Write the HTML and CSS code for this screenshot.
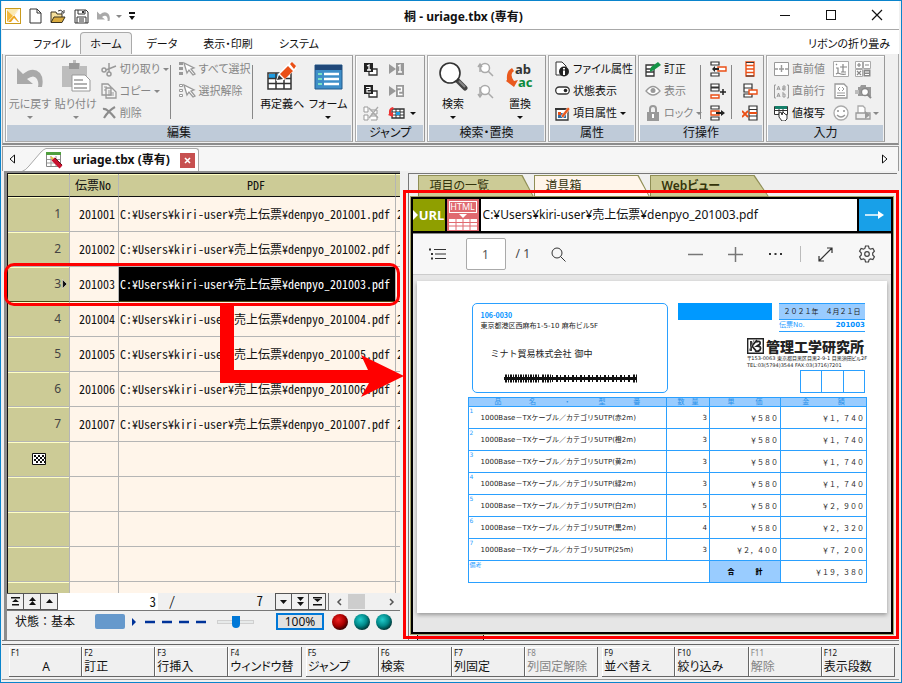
FILE: index.html
```html
<!DOCTYPE html>
<html lang="ja">
<head>
<meta charset="utf-8">
<title>桐 - uriage.tbx (専有)</title>
<link rel="stylesheet" href="styles.css">
</head>
<body>
<div class="window">

<header class="titlebar">
  <div class="quick">
    <svg width="16" height="16" viewBox="0 0 16 16"><rect x=".5" y=".5" width="15" height="15" fill="#fff" stroke="#c99a1c"/><path d="M2 1h12L7.500 8z" fill="#fbe9b0"/><path d="M2 2l6 6-6 6z" fill="#f3b83a"/><path d="M14 2L3 14h3l3-4 4 4h1L9 7z" fill="#eda51f"/></svg>
    <button class="plain" aria-label="新規"><svg width="13" height="16" viewBox="0 0 13 16"><path d="M1 1h7l4 4v10H1zM8 1v4h4" fill="#fff" stroke="#333"/></svg></button>
    <button class="plain" aria-label="開く"><svg width="16" height="15" viewBox="0 0 16 15"><path d="M1 13V3h5l1 2h5v3" fill="#f4df9c" stroke="#3a3320"/><path d="M1 13.500L4 8h11l-3 5.500z" fill="#d9ab3f" stroke="#3a3320"/><path d="M8 2q3-2 5 1M14 1v3h-3" fill="none" stroke="#333"/></svg></button>
    <button class="plain" aria-label="保存"><svg width="15" height="15" viewBox="0 0 15 15"><path d="M1 1h11l2 2v11H1z" fill="#fff" stroke="#333"/><path d="M4 1v4h7V1M3 14V8h9v6M5 10h5M5 12h5" fill="none" stroke="#333"/><path d="M8 2h2v2H8z" fill="#333"/></svg></button>
    <button class="plain" aria-label="元に戻す"><svg width="13" height="12" viewBox="0 0 26 22"><use href="#undo"/></svg></button>
    <i class="caret dim"></i>
    <svg width="6" height="8" viewBox="0 0 6 8"><path d="M0 0h6v2H0zM0 4h6L3 8z" fill="#111"/></svg>
  </div>
  <h1>桐 - uriage.tbx (専有)</h1>
  <div class="syscmds">
    <button class="plain" aria-label="最小化"><svg width="12" height="12"><path d="M1 6.500h10" stroke="#111"/></svg></button>
    <button class="plain" aria-label="最大化"><svg width="12" height="12"><rect x="1.500" y="1.500" width="9" height="9" fill="none" stroke="#111"/></svg></button>
    <button class="plain" aria-label="閉じる"><svg width="12" height="12"><path d="M1 1l10 10M11 1L1 11" stroke="#111" stroke-width="1.200"/></svg></button>
  </div>
</header>

<nav class="menutabs">
  <button>ファイル</button>
  <button class="on">ホーム</button>
  <button>データ</button>
  <button>表示・印刷</button>
  <button>システム</button>
  <button class="fold">リボンの折り畳み</button>
</nav>

<section class="ribbon">
  <div class="group">
    <div class="tools edit">
      <button class="big dim"><svg width="26" height="28" viewBox="0 -4 26 28"><defs><path id="undo" d="M0 2v16h16l-6-5q7-5 10 0 2 4 1 8h4q2-9-2-14-7-7-17 1z" fill="#a9a9a9"/></defs><use href="#undo"/></svg><span>元に戻す</span><i class="caret"></i></button>
      <button class="big dim"><svg width="30" height="32" viewBox="0 0 30 32"><path d="M1 6h7V3h4V0h3v3h4v3h7v21H1z" fill="#bdbdbd"/><path d="M8 3h10v6H8z" fill="#999"/><path d="M11 15h13l5 5v11H11z" fill="#fff" stroke="#999"/><path d="M13 20h9M13 24h13M13 28h13" stroke="#999" stroke-width="1.500"/></svg><span>貼り付け</span><i class="caret"></i></button>
      <div class="col">
        <button class="small dim"><svg width="16" height="15" viewBox="0 0 16 15"><g fill="none" stroke="#999" stroke-width="1.500"><circle cx="3" cy="8" r="2"/><circle cx="8" cy="12" r="2"/><path d="M5 8l10-4M8 10V1"/></g></svg>切り取り<i class="caret"></i></button>
        <button class="small dim"><svg width="16" height="16" viewBox="0 0 16 16"><path d="M1 1h6l3 3v8H1zM5 5h6l4 4v6H5z" fill="#f4f4f4" stroke="#999" stroke-width="1.300"/><path d="M7 8h3M7 10h6M7 12h6M3 4h3M3 7h2" stroke="#999"/></svg>コピー<i class="caret"></i></button>
        <button class="small dim"><svg width="16" height="14" viewBox="0 0 16 14"><path d="M2 3q4-1 12 9M14 1Q8 4 3 12" fill="none" stroke="#8c8c8c" stroke-width="2.200"/></svg>削除</button>
      </div>
      <hr>
      <div class="col">
        <button class="small dim"><svg width="17" height="16" viewBox="0 0 17 16"><path d="M0 1h4v3H0zM0 6h4v3H0zM0 11h4v3H0z" fill="#999"/><path d="M5 2l3 10 2-3 4 5 2-1-4-5 3-1z" fill="#fff" stroke="#999" stroke-width="1.300"/></svg>すべて選択</button>
        <button class="small dim"><svg width="17" height="16" viewBox="0 0 17 16"><path d="M.5 1.500h3v2h-3zM.5 6.500h3v2h-3zM.5 11.500h3v2h-3z" fill="#fff" stroke="#999"/><path d="M5 2l3 10 2-3 4 5 2-1-4-5 3-1z" fill="#fff" stroke="#999" stroke-width="1.300"/></svg>選択解除</button>
      </div>
      <hr>
      <button class="big"><svg width="31" height="30" viewBox="0 0 31 30"><path d="M1 12h23v16H1z" fill="#fff" stroke="#333" stroke-width="1.500"/><path d="M2 13h14v4H2z" fill="#1d9be0"/><path d="M1 17.500h23M1 22.500h23M9 12v16M17 12v16" stroke="#333" stroke-width="1.500"/><path d="M9 20l2-7L23 1l7 6-13 12z" fill="#fff"/><path d="M10 19l2-5 4 4z" fill="#333"/><path d="M13 13l8-8 5 5-8 8zM23 3l2-2 4 4-2 3z" fill="#ea4f16"/></svg><span>再定義へ</span></button>
      <button class="big"><svg width="29" height="30" viewBox="0 0 29 30"><path d="M1 4h27v24H1z" fill="#3e8ec8" stroke="#235a8c"/><path d="M1 4h27v5H1z" fill="#20497a"/><path d="M10 13h15M10 18h15M10 23h15" stroke="#fff" stroke-width="2.400"/><path d="M4 13h4M4 18h4M4 23h4" stroke="#7ae0c4" stroke-width="2"/></svg><span>フォーム</span><i class="caret"></i></button>
    </div>
    <h2>編集</h2>
  </div>

  <div class="group">
    <div class="tools icons2">
      <button class="plain" aria-label="記憶1"><svg width="16" height="15" viewBox="0 0 16 15"><path d="M7 7h7v6H6v-3" fill="#fff" stroke="#333" stroke-width="1.300"/><path d="M1 1h9v9H1z" fill="#222"/><path d="M4 4l2-1v5M4 8h4" fill="none" stroke="#fff" stroke-width="1.300"/></svg></button>
      <button class="plain" aria-label="移動1"><svg width="16" height="14" viewBox="0 0 16 14"><path d="M1 2l7 5-7 5z" fill="#999"/><path d="M8 1h8v12H8z" fill="#999"/><path d="M10 4l2-1v7M10 10h4" fill="none" stroke="#fff" stroke-width="1.300"/></svg></button>
      <button class="plain" aria-label="記憶2"><svg width="16" height="15" viewBox="0 0 16 15"><path d="M7 7h7v6H6v-3" fill="#fff" stroke="#333" stroke-width="1.300"/><path d="M1 1h9v9H1z" fill="#222"/><path d="M3 3.500h4v2H4v2.500h4" fill="none" stroke="#fff" stroke-width="1.200"/></svg></button>
      <button class="plain" aria-label="移動2"><svg width="16" height="14" viewBox="0 0 16 14"><path d="M1 2l7 5-7 5z" fill="#999"/><path d="M8 1h8v12H8z" fill="#999"/><path d="M9.500 3.500h4v3.500h-3v3.500h4" fill="none" stroke="#fff" stroke-width="1.300"/></svg></button>
      <button class="plain" aria-label="記憶の解除"><svg width="16" height="15" viewBox="0 0 16 15"><path d="M1 1h4v5H1zM1 9h4v5H1zM8 4h6v4H8M8 14h6v-4H8" fill="#fff" stroke="#999"/><path d="M6 2l9 10M15 1L6 12" stroke="#aaa" stroke-width="1.300"/></svg></button>
      <button class="plain" aria-label="表ジャンプ"><svg width="17" height="15" viewBox="0 0 17 15"><path d="M4 3h12v9H4z" fill="#fff" stroke="#333" stroke-width="1.300"/><path d="M4 6h12M4 9h12M8 3v9M12 3v9" stroke="#333"/><path d="M8 6h4v3H8z" fill="#1d9be0"/><path d="M5 1Q0 2 1 8l-1 1 5 2V6L3 7q0-4 3-4z" fill="#e33"/></svg></button>
      <i class="caret"></i>
    </div>
    <h2>ジャンプ</h2>
  </div>

  <div class="group">
    <div class="tools search">
      <button class="big"><svg width="30" height="30" viewBox="0 0 30 30"><path d="M19 19l8 8" stroke="#444" stroke-width="5" stroke-linecap="round"/><path d="M21 20l6 6" stroke="#888" stroke-width="2"/><circle cx="12" cy="12" r="10" fill="#fff" stroke="#333" stroke-width="1.600"/></svg><span>検索</span><i class="caret"></i></button>
      <div class="col">
        <button class="plain" aria-label="前を検索"><svg width="17" height="15" viewBox="0 0 17 15"><circle cx="8" cy="6" r="4.500" fill="#fff" stroke="#aaa" stroke-width="1.500"/><path d="M11 9l5 5M1 5l2-3 2 3M3 2v8" fill="none" stroke="#aaa" stroke-width="1.500"/></svg></button>
        <button class="plain" aria-label="次を検索"><svg width="17" height="15" viewBox="0 0 17 15"><circle cx="8" cy="6" r="4.500" fill="#fff" stroke="#aaa" stroke-width="1.500"/><path d="M11 9l5 5M1 10l2 3 2-3M3 3v10" fill="none" stroke="#aaa" stroke-width="1.500"/></svg></button>
      </div>
      <button class="big"><svg width="28" height="28" viewBox="0 0 28 28"><path d="M6 6Q0 9 1 18l-1 1 8 6 4-7-4 1Q3 12 8 9z" fill="#ea5a1e"/><text class="ab" x="9" y="12">ab</text><text class="ab ac" x="12" y="25">ac</text></svg><span>置換</span><i class="caret"></i></button>
    </div>
    <h2>検索・置換</h2>
  </div>

  <div class="group">
    <div class="tools rows">
      <button class="small"><svg width="15" height="16" viewBox="0 0 15 16"><path d="M1 1h6l4 4v9H1z" fill="#fff" stroke="#333"/><circle cx="9" cy="10.500" r="5" fill="#222"/><path d="M9 7v1.500M9 9.500V14" stroke="#fff" stroke-width="2"/></svg>ファイル属性</button>
      <button class="small"><svg width="15" height="10" viewBox="0 0 15 10"><rect x=".7" y="1" width="13.600" height="7" rx="3.500" fill="#fff" stroke="#333" stroke-width="1.300"/><circle cx="10.500" cy="4.500" r="1.800" fill="#222"/></svg>状態表示</button>
      <button class="small"><svg width="15" height="15" viewBox="0 0 15 15"><path d="M1 3h12v11H1z" fill="#fff" stroke="#333" stroke-width="1.300"/><path d="M0 2h14v2H0z" fill="#333"/><path d="M3 7h8v5H3z" fill="#2f6fa8"/><path d="M3 6h3v3H3z" fill="#ea4f16"/><path d="M6 10l7-9 2 2-7 9z" fill="#ea5a1e" stroke="#fff" stroke-width=".5"/></svg>項目属性<i class="caret"></i></button>
    </div>
    <h2>属性</h2>
  </div>

  <div class="group">
    <div class="tools rowops">
      <div class="col">
        <button class="small"><svg width="16" height="15" viewBox="0 0 16 15"><path d="M1 3h8v4H1zM1 7h8v3H1zM1 10h8v4H1z" fill="#fff" stroke="#333" stroke-width="1.300"/><path d="M5 8l1-3 7-5 3 3-7 5-4 2z" fill="#159447"/></svg>訂正</button>
        <button class="small dim"><svg width="16" height="12" viewBox="0 0 16 12"><path d="M1 6q7-9 14 0-7 8-14 0z" fill="#fff" stroke="#999" stroke-width="1.300"/><circle cx="8" cy="5.500" r="2.500" fill="#999"/></svg>表示</button>
        <button class="small dim"><svg width="16" height="16" viewBox="0 0 16 16"><path d="M5 7V4q0-3 3-3t3 3v3" fill="none" stroke="#999" stroke-width="2"/><path d="M2 7h12v9H2z" fill="#999"/><path d="M8 9v4" stroke="#fff" stroke-width="2"/></svg>ロック<i class="caret"></i></button>
      </div>
      <hr>
      <div class="col">
        <button class="plain" aria-label="行挿入"><svg width="17" height="16" viewBox="0 0 17 16"><path d="M1 1h8v3H1zM1 12h8v3H1z" fill="#fff" stroke="#333" stroke-width="1.200"/><path d="M8 6h8v4H8z" fill="#fff" stroke="#ea4f16" stroke-width="1.400"/><path d="M2 8l3-3v2h4v2H5v2z" fill="#222"/></svg></button>
        <button class="plain" aria-label="行追加"><svg width="17" height="16" viewBox="0 0 17 16"><path d="M1 1h8v3H1zM1 5h8v3H1z" fill="#fff" stroke="#333" stroke-width="1.200"/><path d="M1 12h8v3H1z" fill="#fff" stroke="#ea4f16" stroke-width="1.400"/><path d="M13 6v6M10 9h6" stroke="#222" stroke-width="1.500"/></svg></button>
        <button class="plain" aria-label="行移動"><svg width="17" height="16" viewBox="0 0 17 16"><path d="M1 1h8v3H1zM1 12h8v3H1z" fill="#fff" stroke="#333" stroke-width="1.200"/><path d="M1 6h8v4H1z" fill="#fff" stroke="#ea4f16" stroke-width="1.400"/><path d="M15 8l-4-3v2H6v2h5v2z" fill="#222"/></svg></button>
      </div>
      <hr>
      <div class="col">
        <button class="plain" aria-label="行併合"><svg width="16" height="16" viewBox="0 0 16 16"><path d="M4 1h8v14H4z" fill="#fff" stroke="#ea4f16" stroke-width="1.400"/><path d="M4 1.500h8M4 15h8" stroke="#333"/><path d="M4 4.500h8M4 8h8M4 11.500h8" stroke="#ea4f16" stroke-width="1.400"/></svg></button>
        <button class="plain" aria-label="行複写"><svg width="16" height="16" viewBox="0 0 16 16"><path d="M2 1h8v4H2zM2 5h8v4H2zM2 11h8v3H2z" fill="#fff" stroke="#333" stroke-width="1.200"/><path d="M7 7h8v4H7z" fill="#fff" stroke="#ea4f16" stroke-width="1.400"/></svg></button>
        <button class="plain" aria-label="行削除"><svg width="16" height="16" viewBox="0 0 16 16"><path d="M7 1h8v14H7zM7 4.500h8M7 11h8" fill="#fff" stroke="#333" stroke-width="1.200"/><path d="M7 8h8" stroke="#ea4f16" stroke-width="2"/><path d="M0 6l6 6M6 6l-6 6" stroke="#ea4f16" stroke-width="1.800"/></svg></button>
      </div>
    </div>
    <h2>行操作</h2>
  </div>

  <div class="group">
    <div class="tools entry">
      <button class="small dim"><svg width="15" height="14" viewBox="0 0 15 14"><path d="M.5.500h14v13H.5z" fill="#fff" stroke="#999"/><path d="M1 7h3M11 7h3M5 7h5M7.500 3v7" stroke="#999" stroke-width="1.400"/></svg>直前値</button>
      <button class="plain" aria-label="辻"><svg width="16" height="16" viewBox="0 0 16 16"><path d="M.5.500h15v15H.5z" fill="#fff" stroke="#aaa"/><path d="M3 3l1 1M3 7h2v5l-2 1M5 12q4 2 8 1M10 3v8M7 6h7M8 11h5" fill="none" stroke="#888" stroke-width="1.200"/></svg></button>
      <button class="plain" aria-label="計算"><svg width="16" height="16" viewBox="0 0 16 16"><path d="M.5.500h7v7h-7zM8.500.500h7v7h-7zM.5 8.500h7v7h-7z" fill="#fff" stroke="#aaa"/><path d="M8.500 8.500h7v7h-7z" fill="#888"/><path d="M4 2v4M2 4h4M10 4h4M2 10l4 4M6 10l-4 4" stroke="#888" stroke-width="1.200"/><path d="M10 11h4M10 13.500h4" stroke="#fff"/></svg></button>
      <button class="small dim"><svg width="15" height="15" viewBox="0 0 15 15"><path d="M2 1H.5v13H2M13 1h1.500v13H13" fill="none" stroke="#999"/><path d="M3 6l1.500-4L6 6M3.500 5h2M9 2h2v2H9v2h2V4M9 2v4M3 13l1.500-4L6 13M3.500 12h2M9 8v5h2v-3H9" fill="none" stroke="#999"/></svg>直前行</button>
      <button class="plain" aria-label="コード"><svg width="14" height="16" viewBox="0 0 14 16"><path d="M1 1h9l3 3v11H1z" fill="#fff" stroke="#999" stroke-width="1.300"/><path d="M6 4L4 6l2 2M8 4l2 2-2 2M3 10h8M3 12.500h8" fill="none" stroke="#999"/></svg></button>
      <button class="plain" aria-label="画像"><svg width="17" height="16" viewBox="0 0 17 16"><path d="M3 4h2l1-2h5v2h5v9H3z" fill="#999"/><circle cx="10" cy="9" r="3.500" fill="#fff" stroke="#888" stroke-width="1.300"/><path d="M0 7h4v4H0z" fill="#bbb"/><path d="M12 11l4 4" stroke="#888" stroke-width="2"/></svg></button>
      <button class="small"><svg width="15" height="16" viewBox="0 0 15 16"><path d="M.5 1.500h13v8H.5zM.5 5.500h13M5 1v9M9 1v9" fill="#fff" stroke="#333"/><path d="M1 1h12v3H1z" fill="#15806a"/><path d="M5 8l2-1 1 3 1-3 2 2 2 1v4l-2 2H8l-3-4z" fill="#fff" stroke="#333"/></svg>値複写</button>
      <button class="plain" aria-label="顔"><svg width="16" height="16" viewBox="0 0 16 16"><circle cx="8" cy="8" r="7" fill="#fff" stroke="#aaa" stroke-width="1.300"/><path d="M5 5v2M11 5v2" stroke="#999" stroke-width="1.600"/><path d="M4 10q4 4 8 0" fill="none" stroke="#999" stroke-width="1.200"/></svg></button>
      <button class="plain pair" aria-label="印刷"><svg width="16" height="16" viewBox="0 0 16 16"><path d="M3 8V1h5l2 2v5" fill="#fff" stroke="#aaa" stroke-width="1.300"/><path d="M1 8h14v6H1z" fill="#eee" stroke="#999" stroke-width="1.300"/><path d="M10 6l5 4-5 4z" fill="#999"/></svg><i class="caret dim"></i></button>
    </div>
    <h2>入力</h2>
  </div>
</section>

<nav class="doctabs">
  <button class="plain" aria-label="前のタブ"><svg width="6" height="10"><path d="M5.500 1v8L1 5z" fill="#fff" stroke="#111"/></svg></button>
  <div class="doc">
    <svg class="slant" width="24" height="24" viewBox="0 0 24 24"><path d="M0 24Q4 22 7 18L19 4q3-3 5-3.500V24z" fill="#fff"/><path d="M0 23.500Q4 22 7 18L19 4q3-3 5-3.500" fill="none" stroke="#aaa"/></svg>
    <div class="doc-body">
      <svg width="17" height="17" viewBox="0 0 17 17"><path d="M.5.500h14v14H.5z" fill="#fff" stroke="#888"/><path d="M0 0h15v3H0z" fill="#4f9f3e"/><path d="M1 7.500h13M1 11h13M5 4v10M10 4v10" stroke="#999"/><path d="M7 7l8 8" stroke="#c8102e" stroke-width="4"/><path d="M4 4l4 2-2 2z" fill="#e8c040"/><path d="M9 6l7 7" stroke="#6b0d18"/></svg>
      <strong>uriage.tbx (専有)</strong>
      <button class="close" aria-label="タブを閉じる"><svg width="7" height="7"><path d="M1 1l5 5M6 1L1 6" stroke="#fff" stroke-width="1.600"/></svg></button>
    </div>
  </div>
  <button class="plain next" aria-label="次のタブ"><svg width="6" height="10"><path d="M.5 1v8L5 5z" fill="#fff" stroke="#111"/></svg></button>
</nav>

<main class="work">
  <section class="left">
    <div class="sheet">
      <table>
        <colgroup><col class="c-no"><col class="c-id"><col class="c-pdf"><col></colgroup>
        <thead><tr><th></th><th>伝票No</th><th>PDF</th><th></th></tr></thead>
        <tbody>
          <tr><th>1</th><td>201001</td><td>C:¥Users¥kiri-user¥売上伝票¥denpyo_201001.pdf</td><td>2</td></tr>
          <tr><th>2</th><td>201002</td><td>C:¥Users¥kiri-user¥売上伝票¥denpyo_201002.pdf</td><td>2</td></tr>
          <tr class="current"><th>3<svg width="5" height="10"><path d="M.5.500v9L5 5z" fill="#111" stroke="#fff" stroke-width=".5"/></svg></th><td>201003</td><td>C:¥Users¥kiri-user¥売上伝票¥denpyo_201003.pdf</td><td>2</td></tr>
          <tr><th>4</th><td>201004</td><td>C:¥Users¥kiri-user¥売上伝票¥denpyo_201004.pdf</td><td>2</td></tr>
          <tr><th>5</th><td>201005</td><td>C:¥Users¥kiri-user¥売上伝票¥denpyo_201005.pdf</td><td>2</td></tr>
          <tr><th>6</th><td>201006</td><td>C:¥Users¥kiri-user¥売上伝票¥denpyo_201006.pdf</td><td>2</td></tr>
          <tr><th>7</th><td>201007</td><td>C:¥Users¥kiri-user¥売上伝票¥denpyo_201007.pdf</td><td>2</td></tr>
          <tr class="end"><th><svg width="14" height="12" viewBox="0 0 14 12"><path d="M.5.500h13v11H.5z" fill="#fff" stroke="#111"/><path d="M2 3h10M2 7h10" stroke="#111" stroke-width="2" stroke-dasharray="2 2"/><path d="M4 5h9M4 9h9" stroke="#111" stroke-width="2" stroke-dasharray="2 2"/></svg></th><td></td><td></td><td></td></tr>
          <tr><th></th><td></td><td></td><td></td></tr>
          <tr><th></th><td></td><td></td><td></td></tr>
          <tr><th></th><td></td><td></td><td></td></tr>
          <tr><th></th><td></td><td></td><td></td></tr>
        </tbody>
      </table>
    </div>
    <div class="pager">
      <button aria-label="先頭行"><svg width="9" height="9"><path d="M0 0h9v1.500H0zM4.500 2L8 5H1zM1 7h7v1.500H1z" fill="#111"/></svg></button>
      <button aria-label="前ページ"><svg width="9" height="9"><path d="M4.500 0L8 4H1zM4.500 4L8 8H1z" fill="#111"/></svg></button>
      <button aria-label="前行"><svg width="9" height="9"><path d="M4.500 2L8 6H1z" fill="#111"/></svg></button>
      <input aria-label="現在行" value="3">
      <span>/</span>
      <output>7</output>
      <button aria-label="次行"><svg width="9" height="9"><path d="M4.500 7L8 3H1z" fill="#111"/></svg></button>
      <button aria-label="次ページ"><svg width="9" height="9"><path d="M4.500 4L8 0H1zM4.500 9L8 5H1z" fill="#111"/></svg></button>
      <button aria-label="最終行"><svg width="9" height="9"><path d="M0 0h9v1.500H0zM4.500 5L8 2H1zM0 7h9v1.500H0z" fill="#111"/></svg></button>
      <div class="hscroll">
        <svg width="6" height="8"><path d="M5 1L2 4l3 3" fill="none" stroke="#555" stroke-width="1.500"/></svg>
        <i></i>
        <svg width="6" height="8"><path d="M1 1l3 3-3 3" fill="none" stroke="#555" stroke-width="1.500"/></svg>
      </div>
    </div>
    <div class="status">
      <span class="mode">状態：基本</span>
      <i class="swatch"></i>
      <svg width="76" height="8" viewBox="0 0 76 8"><path d="M1 0l4 4-4 4z" fill="#003399"/><path d="M14 4h10M31 4h10M48 4h10M65 4h10" stroke="#003399" stroke-width="2.500"/></svg>
      <input type="range" aria-label="表示倍率" value="50">
      <button class="zoom">100%</button>
      <i class="ball red"></i><i class="ball"></i><i class="ball"></i>
    </div>
  </section>

  <section class="right">
    <nav class="viewtabs">
      <button><span>項目の一覧</span></button>
      <button class="on"><span>道具箱</span></button>
      <button class="web"><span>Webビュー</span></button>
    </nav>
    <div class="viewer">
      <div class="urlbar">
        <button class="url"><svg width="5" height="10"><path d="M0 0v10l5-5z" fill="#fff"/></svg>URL</button>
        <button class="html"><span>HTML</span><svg width="28" height="16" viewBox="0 0 28 16"><path d="M10 0h8l-4 4z" fill="#fff"/><path d="M0 5h28v11H0z" fill="#fff"/><path d="M0 8.500h28M0 12h28M7 5v11M14 5v11M21 5v11" stroke="#e06a70"/></svg></button>
        <input aria-label="URL" value="C:¥Users¥kiri-user¥売上伝票¥denpyo_201003.pdf">
        <button class="go" aria-label="移動"><svg width="20" height="10"><path d="M0 5h15" stroke="#fff" stroke-width="1.500"/><path d="M13 1l6 4-6 4z" fill="#fff"/></svg></button>
      </div>
      <div class="pdfbar">
        <button class="plain" aria-label="目次"><svg width="17" height="12" viewBox="0 0 17 12"><path d="M5 1.500h12M6 6h11M6 10.500h11" stroke="#333" stroke-width="1.200"/><path d="M0 .5h2v2H0zM2 5h2v2H2zM2 9.500h2v2H2z" fill="#333"/></svg></button>
        <input aria-label="ページ番号" value="1">
        <span>/ 1</span>
        <button class="plain" aria-label="検索"><svg width="15" height="15"><circle cx="6" cy="6" r="5" fill="none" stroke="#333"/><path d="M9.500 9.500l5 5" stroke="#333"/></svg></button>
        <div class="pdftools">
          <button class="plain" aria-label="縮小"><svg width="15" height="15"><path d="M0 7.500h15" stroke="#777" stroke-width="1.500"/></svg></button>
          <button class="plain" aria-label="拡大"><svg width="15" height="15"><path d="M0 7.500h15M7.500 0v15" stroke="#777" stroke-width="1.500"/></svg></button>
          <button class="plain" aria-label="その他"><svg width="15" height="15"><path d="M1 6h2v2H1zM6.500 6h2v2h-2zM12 6h2v2h-2z" fill="#333"/></svg></button>
          <i></i>
          <button class="plain" aria-label="全画面"><svg width="15" height="15"><path d="M1 14L14 1M9 1h5v5M1 9v5h5" fill="none" stroke="#333" stroke-width="1.200"/></svg></button>
          <button class="plain" aria-label="設定"><svg width="18" height="18" viewBox="0 0 18 18"><path d="M7.500 1h3l.6 2.400 1.400.8 2.400-.7 1.500 2.700L14.700 8v2l1.700 1.800-1.500 2.700-2.400-.7-1.400.8-.6 2.400h-3l-.6-2.400-1.400-.8-2.400.7-1.500-2.700L3.300 10V8L1.600 6.200l1.500-2.700 2.400.7 1.400-.8z" fill="none" stroke="#444" stroke-width="1.200"/><circle cx="9" cy="9" r="2.300" fill="none" stroke="#444" stroke-width="1.200"/></svg></button>
        </div>
      </div>
      <div class="canvas">
        <article class="page">
          <div class="top">
            <div class="to">
              <p class="zip">106-0030</p>
              <p>東京都港区西麻布1-5-10 麻布ビル5F</p>
              <p class="name">ミナト貿易株式会社 御中</p>
              <svg width="133" height="9" viewBox="0 0 133 9"><path d="M0 4.500h133" stroke="#111" stroke-width="3"/><path d="M1 4.500h34M38 4.500h10M129 4.500h4" stroke="#111" stroke-width="8" stroke-dasharray="2 1 1 1"/><path d="M48 4.500h80" stroke="#111" stroke-width="7" stroke-dasharray="1 3 2 2"/></svg>
            </div>
            <div class="bar"></div>
            <div class="from">
              <div class="date">2021年 4月21日</div>
              <div class="slip"><span>伝票No.</span><b>201003</b></div>
              <div class="company"><svg width="17" height="16" viewBox="0 0 17 16"><path d="M.7.700h15.600v14.600H.7z" fill="#fff" stroke="#222" stroke-width="1.400"/><path d="M4 3v10M10 2L5 8l5 6M9 4q5-2 4 2l-3 2q5 0 3 4-2 2-5 1" fill="none" stroke="#222" stroke-width="1.800"/><path d="M2 13L7 2" stroke="#777"/></svg><strong>管理工学研究所</strong></div>
              <p>〒153-0063 東京都目黒区目黒2-9-1 目黒須田ビル2F</p>
              <p>TEL:03(5794)3544 FAX:03(3716)7201</p>
              <div class="stamps"><i></i><i></i><i></i></div>
            </div>
          </div>
          <table class="items">
            <colgroup><col><col class="q"><col class="u"><col class="a"></colgroup>
            <thead><tr><th><div><span>品</span><span>名</span><span>・</span><span>型</span><span>番</span></div></th><th><div><span>数</span><span>量</span></div></th><th><div><span>単</span><span>価</span></div></th><th><div><span>金</span><span>額</span></div></th></tr></thead>
            <tbody>
              <tr><td><div><sup>1</sup>1000Base－TXケーブル／カテゴリ5UTP(赤2m)</div></td><td>3</td><td>¥580</td><td>¥1,740</td></tr>
              <tr><td><div><sup>2</sup>1000Base－TXケーブル／カテゴリ5UTP(橙2m)</div></td><td>3</td><td>¥580</td><td>¥1,740</td></tr>
              <tr><td><div><sup>3</sup>1000Base－TXケーブル／カテゴリ5UTP(黄2m)</div></td><td>3</td><td>¥580</td><td>¥1,740</td></tr>
              <tr><td><div><sup>4</sup>1000Base－TXケーブル／カテゴリ5UTP(緑2m)</div></td><td>3</td><td>¥580</td><td>¥1,740</td></tr>
              <tr><td><div><sup>5</sup>1000Base－TXケーブル／カテゴリ5UTP(白2m)</div></td><td>5</td><td>¥580</td><td>¥2,900</td></tr>
              <tr><td><div><sup>6</sup>1000Base－TXケーブル／カテゴリ5UTP(黒2m)</div></td><td>4</td><td>¥580</td><td>¥2,320</td></tr>
              <tr><td><div><sup>7</sup>1000Base－TXケーブル／カテゴリ5UTP(25m)</div></td><td>3</td><td>¥2,400</td><td>¥7,200</td></tr>
              <tr class="total"><td colspan="2"><div><sup>備考</sup></div></td><th><div><span>合</span><span>計</span></div></th><td>¥19,380</td></tr>
            </tbody>
          </table>
        </article>
      </div>
    </div>
    <i class="grip"></i>
  </section>

  <div class="mark-row"></div>
  <div class="mark-view"></div>
  <svg class="arrow" width="184" height="96" viewBox="0 0 184 96"><path d="M0 0h14v65h134l-7-15 43 21-43 21 8-14H0z" fill="#f00"/></svg>
</main>

<footer class="fkeys">
  <div>
    <button><small>F1</small><span class="mid">A</span></button>
    <button><small>F2</small><span>訂正</span></button>
    <button><small>F3</small><span>行挿入</span></button>
    <button><small>F4</small><span>ウィンドウ替</span></button>
  </div>
  <div>
    <button><small>F5</small><span>ジャンプ</span></button>
    <button><small>F6</small><span>検索</span></button>
    <button><small>F7</small><span>列固定</span></button>
    <button class="dim"><small>F8</small><span>列固定解除</span></button>
  </div>
  <div>
    <button><small>F9</small><span>並べ替え</span></button>
    <button><small>F10</small><span>絞り込み</span></button>
    <button class="dim"><small>F11</small><span>解除</span></button>
    <button><small>F12</small><span>表示段数</span></button>
  </div>
</footer>
</div>
</body>
</html>
```
FILE: styles.css
```css
* { box-sizing: border-box; }
body, h1, h2, p, hr { margin: 0; }
body {
  font: 11px/16px "Noto Sans", "Noto Sans CJK JP", sans-serif;
  font-feature-settings: "palt";
  color: #111;
}
button, input { font: inherit; font-feature-settings: inherit; color: inherit; margin: 0; padding: 0; border: 0; background: none; border-radius: 0; min-width: 0; }
button { white-space: nowrap; }
svg { display: block; flex: none; }
.plain { display: grid; place-items: center; }

.window {
  height: 100vh;
  display: flex;
  flex-direction: column;
  border: 1px solid #0a84cc;
  padding: 0 2px 2px 1px;
  background: #f0f0f0;
  overflow: hidden;
}

/* title bar */
.titlebar {
  flex: none;
  height: 29px;
  display: grid;
  grid-template-columns: 1fr auto 1fr;
  align-items: center;
  background: #fff;
  border-bottom: 1px solid #a8a8a8;
}
.titlebar h1 { font-size: 12px; line-height: 16px; font-weight: 700; padding: 3px 0 0 26px; }
.quick { display: flex; align-items: center; gap: 8px; padding: 2px 0 0 3px; }
.quick .caret { margin-left: -2px; }
.quick .caret + svg { margin-left: -1px; }
.syscmds { display: flex; justify-content: flex-end; gap: 34px; padding-right: 16px; }
.caret { flex: none; width: 0; height: 0; border: 3px solid transparent; border-top-color: #111; border-bottom: 0; }
.dim .caret, .caret.dim { border-top-color: #888; }
.dim { color: #858585; }

/* ribbon tabs */
.menutabs { flex: none; height: 24px; display: flex; padding-left: 22px; background: #fff; margin-bottom: -1px; z-index: 1; }
.menutabs button { width: 50px; margin-top: 2px; padding: 1px 0 0; }
.menutabs button:nth-child(1) { width: 56px; }
.menutabs .on { background: #f0f0f0; border: 1px solid #aaa; border-bottom: 0; border-radius: 4px 4px 0 0; width: 52px; }
.menutabs button:nth-child(3) { width: 60px; }
.menutabs button:nth-child(4) { width: 72px; }
.menutabs button:nth-child(5) { width: 70px; }
.menutabs .fold { margin-left: auto; width: auto; padding-right: 9px; }

.ribbon {
  flex: none;
  display: grid;
  grid-template-columns: 348px 70px 119px 88px 126px 119px;
  gap: 2px;
  padding: 1px 1px 1px 2px;
  border: 1px solid #aaa;
  border-bottom: 2px solid #8c8c8c;
}
.group { border: 1px solid #aaa; border-right-color: #999; background: #f0f0f0; padding: 1px 1px 0; box-shadow: inset 1px 1px #fff; }
.group h2 { font: inherit; font-size: 12px; line-height: 16px; text-align: center; background: #bfcbd9; }
.tools { height: 68px; display: flex; align-items: stretch; padding: 1px 0; }
.tools hr { width: 1px; height: 54px; margin-top: 7px; border: 0; background: #888; flex: none; }
.col, .rows { display: grid; grid-template-rows: repeat(3, 22px); }
.small { display: flex; align-items: center; gap: 3px; }
.big { display: flex; flex-direction: column; align-items: center; }
.big svg { height: 34px; margin-top: 1px; }
.big span { margin-top: 3px; }
.big .caret { margin-top: 4px; }
.edit .big { width: 46px; }
.edit .col { width: 71px; padding-left: 2px; }
.edit hr + .col { width: 82px; padding-left: 8px; }
.edit hr + .big { margin-left: 6px; }
.icons2 { display: grid; grid-template: repeat(3, 22px) / 28px 22px 14px; align-items: center; }
.icons2 button:nth-child(5) { grid-row: 3; grid-column: 1; }
.icons2 button:nth-child(odd) { grid-column: 1; }
.icons2 button:nth-child(even) { grid-column: 2; }
.icons2 .caret { grid-column: 3; grid-row: 3; margin-left: 3px; }
.search .big { width: 48px; }
.search .big:last-child { margin-left: 4px; width: 44px; }
.search .col { width: 17px; }
.ab { font: 700 13px "Noto Sans", sans-serif; fill: #333; }
.ac { fill: #0a8a3a; }
.rows { padding-left: 5px; }
.rowops .col { width: 60px; padding-left: 5px; }
.rowops hr + .col { width: 30px; }
.entry { display: grid; grid-template: repeat(3, 22px) / 57px 20px 24px; padding-left: 6px; align-items: center; }
.pair { display: flex; align-items: center; padding-left: 4px; gap: 2px; }

/* document tabs */
.doctabs {
  flex: none;
  margin-top: 1px;
  height: 25px;
  display: flex;
  padding: 0 10px 0 6px;
  border: 1px solid #999;
  border-bottom: 0;
  background: #f6f6f6;
}
.doc { display: flex; margin-left: 7px; }
.slant { margin-top: 1px; }
.doc-body { display: flex; align-items: center; gap: 10px; padding: 0 3px 0 0; margin-top: 1px; border: solid #aaa; border-width: 1px 1px 0 0; background: #fff; border-radius: 0 3px 0 0; font-size: 12px; }
.close { width: 15px; height: 15px; background: #c75050; display: grid; place-items: center; }
.next { margin-left: auto; }

/* work area */
.work { flex: 1; min-height: 0; position: relative; display: grid; grid-template-columns: minmax(0, 396fr) minmax(0, 500fr); padding-left: 2px; border-bottom: 1px solid #666; box-shadow: inset 0 -3px #f0f0f0, inset 0 -4px #777; }
.left { display: flex; flex-direction: column; min-height: 0; border: solid #8c8c8c; border-width: 2px 0 0 3px; margin-bottom: 4px; padding-bottom: 8px; }
.sheet { flex: 1; min-height: 0; overflow: hidden; border: solid #111; border-width: 1px 0 0 1px; background: #fff5ea; }
.sheet table { width: 100%; table-layout: fixed; border-spacing: 0; font: 12px/16px "Noto Sans CJK JP", monospace; font-feature-settings: "hwid"; }
.c-no { width: 62px; }
.c-id { width: 49px; }
.c-pdf { width: 277px; }
.sheet th, .sheet td { height: 35px; padding: 0 3px 1px 1px; border: solid #b5b5b5; border-width: 0 1px 1px 0; white-space: nowrap; overflow: hidden; font-weight: 400; }
.sheet td:last-child, .sheet th:last-child { border-right: 0; padding-right: 0; }
.sheet th { background: #cccb96; box-shadow: inset 0 1px #ffffc4; }
.sheet thead th { height: 23px; border-bottom-color: #111; }
.sheet tbody th { text-align: right; padding-right: 8px; font: 12px/16px "Noto Sans", sans-serif; color: #444; }
.sheet .current th { padding-right: 2px; }
.current svg { display: inline-block; vertical-align: -1px; margin-left: 1px; }
.sheet .current td, .sheet .current th { border-bottom-color: #4b4a12; }
.sheet .current td:nth-child(3) { background: #000; color: #fff; }
.sheet .end th { padding-left: 24px; }
.sheet td:nth-child(2) { text-align: right; }

.pager { flex: none; height: 18px; display: flex; align-items: stretch; border-bottom: 1px solid #777; font: 13px/16px "Noto Sans CJK JP", monospace; font-feature-settings: "hwid"; }
.pager button { width: 17px; border: 1px solid #555; border-left-width: 0; display: grid; place-items: center; flex: none; }
.pager input { width: 100px; background: #fff; text-align: right; padding-right: 2px; }
.pager span { width: 28px; text-align: center; }
.pager output { width: 77px; text-align: right; }
.pager output + button { margin-left: 12px; border-left-width: 1px; }
.hscroll { flex: 1; display: flex; align-items: center; padding: 0 5px 0 7px; border-left: 1px solid #777; margin-left: 2px; }
.hscroll i { width: 17px; height: 15px; background: #cdcdcd; margin-left: 6px; }
.hscroll svg:last-child { margin-left: auto; }
.status { flex: none; height: 21px; display: flex; align-items: center; padding: 0 7px 0 8px; font-size: 12px; }
.mode { width: 80px; font-feature-settings: normal; }
.swatch { width: 30px; height: 15px; border-radius: 2px; background: #6699cc; margin-right: 6px; }
.status input { appearance: none; width: 37px; height: 12px; margin: 0 22px 0 10px; }
.status input::-webkit-slider-runnable-track { height: 4px; background: #e7eaea; border: 1px solid #d0d0d0; }
.status input::-webkit-slider-thumb { appearance: none; width: 8px; height: 12px; margin-top: -5px; background: #0078d7; border-radius: 0 0 4px 4px; }
.zoom { width: 48px; height: 17px; border: 2px solid #0078d7; background: #e1e1e1; font: 12px/13px "Noto Sans", sans-serif; }
.ball { width: 16px; height: 16px; border-radius: 50%; margin-left: 6px; background: radial-gradient(circle at 40% 35%, #2cc, #088 45%, #033 75%); }
.ball.red { margin-left: 8px; background: radial-gradient(circle at 40% 35%, #e22, #a00 45%, #300 75%); }

/* right pane */
.right { position: relative; display: flex; flex-direction: column; min-height: 0; margin: 2px 2px 4px 8px; padding: 1px 4px 6px 2px; border: solid #777; border-width: 1px 0 0 1px; }
.viewtabs { flex: none; height: 22px; display: flex; padding-left: 7px; }
.viewtabs button { width: 116px; padding: 1px; background: #8f8e55; clip-path: polygon(0 0, 105px 0, 100% 21px, 100% 100%, 0 100%); }
.viewtabs span { display: block; height: 20px; padding-left: 11px; text-align: left; font-size: 12px; line-height: 19px; background: #cccb96; color: #33330a; clip-path: polygon(0 0, 103px 0, 100% 100%, 0 100%); }
.viewtabs .on span { background: #fff5ea; }
.viewtabs .web { font-weight: 600; width: 119px; }
.viewer { flex: 1; min-height: 0; display: flex; flex-direction: column; border: 2px solid #000; box-shadow: 0 0 0 1px #a5a46a; background: #e6e6e6; }
.urlbar { flex: none; height: 34px; display: flex; gap: 2px; background: #000; border-bottom: 2px solid #000; }
.urlbar .url { width: 32px; background: #8f9f00; color: #fff; display: flex; align-items: center; justify-content: center; gap: 1px; font: 700 13px "Open Sans", sans-serif; }
.urlbar .html { width: 32px; background: #e06a70; color: #fff; padding: 2px; }
.html span { display: block; height: 12px; border: 1px solid #fff; font: 9px/10px "Noto Sans", sans-serif; }
.html svg { margin-top: 1px; }
.urlbar input { flex: 1; background: #fff; font-size: 12px; padding-left: 2px; }
.urlbar .go { width: 32px; background: #18a0e8; display: grid; place-items: center; }
.pdfbar { flex: none; height: 42px; display: flex; align-items: center; background: #f7f7f7; border-top: 1px solid #888; border-bottom: 1px solid #ccc; padding: 0 15px 0 16px; font-size: 12px; }
.pdfbar input { width: 40px; height: 32px; margin: 0 10px 0 20px; border: 1px solid #aaa; border-radius: 2px; text-align: center; color: #555; background: #fff; }
.pdfbar span { width: 35px; color: #444; }
.pdftools { margin-left: auto; display: flex; align-items: center; gap: 25px; }
.pdftools i { width: 1px; height: 16px; background: #bbb; margin: 0 -8px 0 -8px; }
.canvas { flex: 1; min-height: 0; padding: 6px 4px 19px; }
.page { height: 100%; background: #fff; box-shadow: 0 2px 4px #999; padding: 22px 20px 0 51px; color: #222; font: 7px/8px "DejaVu Sans", "Noto Sans CJK JP", sans-serif; font-feature-settings: normal; }
.top { display: grid; grid-template-columns: 196px 1fr 118px; padding: 0 2px 0 4px; height: 94px; }
.to { height: 90px; border: 1px solid #2aa0ff; border-radius: 5px; padding: 6px 8px; }
.to p { line-height: 11px; }
.to .zip { color: #0090ff; font-weight: 700; font-family: "Noto Sans CJK JP", sans-serif; }
.to .name { font-size: 9px; line-height: 16px; padding: 14px 0 0 10px; }
.to svg { margin: 12px 0 0 23px; }
.bar { height: 17px; margin: 0 -25px 0 10px; background: #0099ff; }
.from { display: flex; flex-direction: column; align-items: flex-end; }
.date { width: 86px; height: 17px; background: #99ccff; border-top: 1px solid #2aa0ff; border-bottom: 1px solid #2aa0ff; font: 7px/15px "Noto Sans CJK JP", sans-serif; font-feature-settings: "fwid"; text-align: center; white-space: nowrap; }
.slip { width: 86px; height: 12px; margin-bottom: 5px; display: flex; justify-content: space-between; border-bottom: 1px solid #2aa0ff; color: #2aa0ff; line-height: 11px; }
.slip b { color: #0090ff; font-size: 7px; }
.company { display: flex; align-items: center; gap: 2px; width: 118px; height: 18px; }
.company strong { font: 900 14px/16px "Noto Sans CJK JP", sans-serif; }
.from p { width: 118px; font-size: 5px; line-height: 7px; white-space: nowrap; font-feature-settings: "palt"; }
.stamps { display: grid; grid-template-columns: repeat(3, 1fr); width: 65px; height: 23px; margin-top: auto; margin-bottom: 4px; border: solid #2aa0ff; border-width: 1px 0 1px 1px; }
.stamps i { border-right: 1px solid #2aa0ff; }
.items { width: 100%; table-layout: fixed; border-spacing: 0; border-left: 1px solid #2aa0ff; border-top: 1px solid #2aa0ff; }
.items .q { width: 43px; }
.items .u { width: 71px; }
.items .a { width: 86px; }
.items td, .items th { height: 22px; padding: 0 2px; border: solid #2aa0ff; border-width: 0 1px 1px 0; text-align: right; font-weight: 400; }
.items td:nth-child(n+3), .total td:last-child { font-family: "Noto Sans CJK JP", sans-serif; font-feature-settings: "fwid"; }
.items thead th { height: 9px; background: #99ccff; color: #2a90e8; line-height: 7px; }
.items th div { display: flex; justify-content: space-around; padding: 0 5px; }
.items th:first-child div { padding: 0 10px; }
.items td div { text-align: left; position: relative; padding-left: 10px; white-space: nowrap; }
.items sup { position: absolute; left: -1px; top: -7px; font-size: 6px; color: #2aa0ff; line-height: 8px; }
.items .total th { background: #99ccff; font-weight: 900; color: #000; }
.items .total td div { height: 8px; }
.grip { position: absolute; left: 8px; bottom: 0; width: 67px; height: 5px; background: #ccc; border: solid #111; border-width: 0 1px; }

/* call-out marks */
.mark-row { position: absolute; left: 2px; top: 92px; width: 396px; height: 43px; border: 3px solid #f00; border-radius: 10px; }
.mark-view { position: absolute; left: 401px; right: 0; top: 19px; bottom: 5px; border: 3px solid #f00; }
.arrow { position: absolute; left: 218px; top: 134px; }

/* function keys */
.fkeys { flex: none; display: grid; grid-template-columns: repeat(3, 1fr); gap: 4px; padding: 2px 4px 2px 7px; border-bottom: 1px solid #999; }
.fkeys div { display: grid; grid-template-columns: repeat(4, 1fr); }
.fkeys button { height: 30px; border: solid #666; border-width: 0 1px 1px 0; box-shadow: inset 1px 1px #fff; text-align: left; padding-left: 2px; display: flex; flex-direction: column; justify-content: space-between; }
.fkeys small { font-size: 8px; line-height: 11px; }
.fkeys span { font-size: 12px; line-height: 18px; }
.fkeys .mid { align-self: center; }
```
